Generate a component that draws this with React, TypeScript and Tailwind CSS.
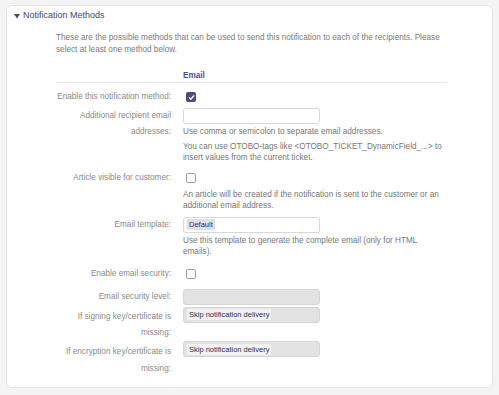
import React from 'react';

const font = { fontFamily: '"Liberation Sans", Arial, sans-serif' };

function Check({ checked }: { checked?: boolean }) {
  if (checked) {
    return (
      <span className="inline-flex w-[10px] h-[10px] rounded-[2px] bg-[#4b4b7c] items-center justify-center">
        <svg width="7" height="7" viewBox="0 0 8 8">
          <path d="M1.5 4.2 L3.3 6 L6.6 2" fill="none" stroke="#fff" strokeWidth="1.4" strokeLinecap="round" strokeLinejoin="round" />
        </svg>
      </span>
    );
  }
  return <span className="inline-block w-[10px] h-[10px] rounded-[2px] border border-[#a0a0a0] bg-white" />;
}

function Label({ children, className = '' }: { children: React.ReactNode; className?: string }) {
  return <div className={`text-right text-[#8a8a8a] leading-[16px] ${className}`}>{children}</div>;
}

function Hint({ children, className = '' }: { children: React.ReactNode; className?: string }) {
  return <div className={`text-[#777] leading-[11.5px] ${className}`}>{children}</div>;
}

function Field({ token, disabled }: { token?: string; disabled?: boolean }) {
  return (
    <div className={`w-[137px] h-[16px] rounded-[3px] border flex items-center px-[3px] ${disabled ? 'bg-[#e3e3e3] border-[#d6d6d6]' : 'bg-white border-[#d8d8d8]'}`}>
      {token && (
        <span className={`h-[11px] leading-[11px] px-[2px] text-[7.5px] text-[#2f2f5a] ${disabled ? 'bg-[#f2f2f2]' : 'bg-[#dfdfe6]'}`}>{token}</span>
      )}
    </div>
  );
}

export default function App() {
  return (
    <div className="w-[499px] h-[395px] bg-[#f4f4f4] pt-[5px] px-[6px]" style={font}>
      <div className="bg-white border border-[#e4e4e4] rounded-[6px] h-[383px] text-[8.2px]">
        <div className="flex items-center h-[20px] pl-[7px] text-[9px] text-[#45456e]">
          <svg width="6" height="5" viewBox="0 0 6 5" className="mr-[3px]">
            <path d="M0 0 L6 0 L3 4.5 Z" fill="#45456e" />
          </svg>
          Notification Methods
        </div>
        <div className="ml-[49px] mr-[45px] mt-[6px]">
          <p className="text-[#7a7a7a] leading-[12px]">
            These are the possible methods that can be used to send this notification to each of the recipients. Please select at least one method below.
          </p>
          <div className="mt-[14px] border-b border-[#e8e8e8] pb-[0px] pl-[127px] leading-[12px] font-bold text-[#50508a]">Email</div>

          <div className="grid grid-cols-[115px_1fr] gap-x-[12px] mt-[6px]">
            <Label>Enable this notification method:</Label>
            <div className="h-[16px] flex items-center pl-[3px]"><Check checked /></div>

            <Label className="mt-[3px]">Additional recipient email<br />addresses:</Label>
            <div className="mt-[3px]">
              <Field />
              <Hint className="mt-[1.5px]">Use comma or semicolon to separate email addresses.</Hint>
              <Hint className="mt-[3.5px]">You can use OTOBO-tags like &lt;OTOBO_TICKET_DynamicField_...&gt; to<br />insert values from the current ticket.</Hint>
            </div>

            <Label className="mt-[6px]">Article visible for customer:</Label>
            <div className="mt-[6px]">
              <div className="h-[16px] flex items-center pl-[3px]"><Check /></div>
              <Hint className="mt-[3px]">An article will be created if the notification is sent to the customer or an<br />additional email address.</Hint>
            </div>

            <Label className="mt-[5px]">Email template:</Label>
            <div className="mt-[5px]">
              <Field token="Default" />
              <Hint className="mt-[2px]">Use this template to generate the complete email (only for HTML<br />emails).</Hint>
            </div>

            <Label className="mt-[8.5px]">Enable email security:</Label>
            <div className="mt-[8.5px] h-[16px] flex items-center pl-[3px]"><Check /></div>

            <Label className="mt-[7px]">Email security level:</Label>
            <div className="mt-[7px]"><Field disabled /></div>

            <Label className="mt-[3.5px]">If signing key/certificate is<br />missing:</Label>
            <div className="mt-[1.5px]"><Field token="Skip notification delivery" disabled /></div>

            <Label className="mt-[2px] leading-[17px]">If encryption key/certificate is<br />missing:</Label>
            <div className="mt-[0.5px]"><Field token="Skip notification delivery" disabled /></div>
          </div>
        </div>
      </div>
    </div>
  );
}
